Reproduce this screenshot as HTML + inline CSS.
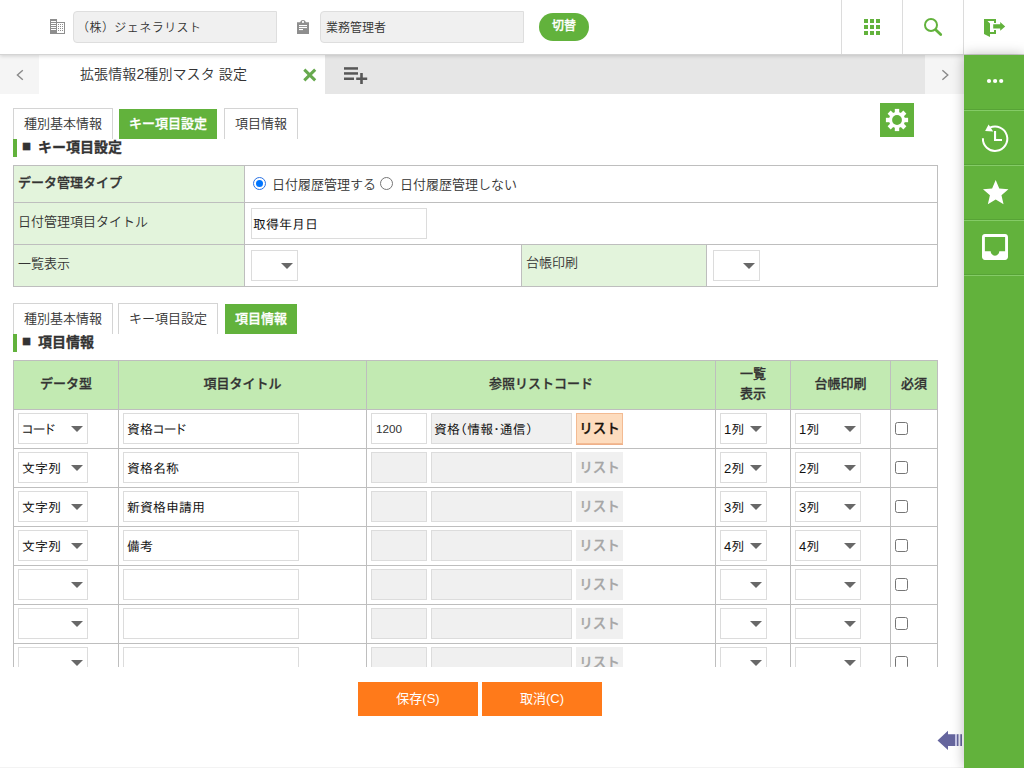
<!DOCTYPE html>
<html lang="ja">
<head>
<meta charset="utf-8">
<title>拡張情報2種別マスタ 設定</title>
<style>
*{box-sizing:border-box;margin:0;padding:0}
html,body{width:1024px;height:768px;overflow:hidden;background:#fff}
body{font-family:"Liberation Sans","Noto Sans CJK JP",sans-serif;font-size:13px;font-weight:350;color:#333;position:relative}
.abs{position:absolute}
/* header */
#hdr{position:absolute;left:0;top:0;width:1024px;height:55px;background:#fff;border-bottom:1px solid #d4d4d4;box-shadow:0 1px 4px rgba(0,0,0,.16);z-index:5}
.hin{position:absolute;top:11px;height:32px;background:#f0f0f0;border:1px solid #dedede;border-radius:4px 0 0 4px;font-size:12px;line-height:30px;padding-top:1px;color:#333;padding-left:5px;white-space:nowrap}
.vdiv{position:absolute;top:0;width:1px;height:54px;background:#dcdcdc}
#sw{position:absolute;left:539px;top:13px;width:50px;height:28px;border-radius:14px;background:#62b23c;color:#fff;font-weight:500;-webkit-text-stroke:.3px;font-size:12px;line-height:27px;text-align:center}
/* tab strip */
#strip{position:absolute;left:0;top:55px;width:964px;height:39px;background:#e6e6e6}
#strip .arrL{position:absolute;left:0;top:0;width:39px;height:39px;background:#f5f5f5}
#strip .arrR{position:absolute;left:925px;top:0;width:39px;height:39px;background:#f5f5f5}
#strip .tab{position:absolute;left:39px;top:0;width:286px;height:39px;background:#fff;font-size:14px;line-height:39px;color:#333;white-space:nowrap}
/* side */
#side{position:absolute;left:964px;top:55px;width:60px;height:713px;background:#62b23c;box-shadow:0 0 12px rgba(0,0,0,.27);z-index:6}
#side .sep{position:absolute;left:0;width:60px;height:2px;border-top:1px solid #57a336;border-bottom:1px solid #84cb66}
/* subtabs */
.stab{position:absolute;height:31px;border:1px solid #d4d4d4;border-bottom:none;background:#fff;font-size:13px;line-height:29px;text-align:center;color:#333;white-space:nowrap}
.stab.on{background:#62b23c;border-color:#fff;color:#fff;font-weight:500;-webkit-text-stroke:.3px}
.sec{position:absolute;left:13px;width:300px;height:18px;border-left:4px solid #62b23c;font-size:14px;font-weight:500;-webkit-text-stroke:.3px;line-height:17px;color:#333;white-space:nowrap}
.sec i{position:absolute;left:5px;top:-1px;font-style:normal;font-size:15px;line-height:16px}
.sec b{position:absolute;left:21px;top:0}
/* key table */
.cell{position:absolute;border:1px solid #bebebe;background:#fff}
.cell.g{background:#e3f4dc}
.lbl{position:absolute;font-size:13px;color:#333;white-space:nowrap;line-height:18px}
.inp{position:absolute;background:#fff;border:1px solid #dcdcdc;font-size:13px;color:#111;white-space:nowrap;overflow:hidden;font-family:"Liberation Sans","IPAPGothic","Noto Sans CJK JP",sans-serif}
.inp.dis{background:#f0f0f0;border-color:#dcdcdc}
.inp span{position:absolute;left:3px;top:.5px;line-height:29px}
.inp span.num{font-size:11.7px;color:#333;left:4px;top:0}
.dd:after{content:"";position:absolute;right:4.5px;top:12px;border:6px solid transparent;border-top:6px solid #686868;border-bottom:none}
.th{position:absolute;background:#c2eab2;border:1px solid #bebebe;font-weight:500;-webkit-text-stroke:.3px;font-size:13px;color:#333;text-align:center;line-height:20px;white-space:nowrap}
.lst{position:absolute;width:47px;height:31px;background:#f0f0f0;color:#a6a6a6;font-weight:500;-webkit-text-stroke:.3px;font-size:13.5px;line-height:31px;text-align:center}
.lst.en{background:#fddcbe;border:1px solid #f3bb93;color:#1c140c;line-height:29px;box-shadow:0 1px 0 #eeb08a}
.radio{position:absolute;width:13px;height:13px;border:1px solid #767676;border-radius:50%;background:#fff}
.radio.on{border-color:#2a72e4}
.radio.on:after{content:"";position:absolute;left:1.800px;top:1.800px;width:7.400px;height:7.400px;border-radius:50%;background:#0075ff}
.cb{position:absolute;width:13px;height:13px;border:1px solid #767676;border-radius:2.5px;background:#fff}
.btn{position:absolute;top:682px;width:120px;height:34px;background:#ff7a1a;color:#fff;font-weight:400;font-size:13px;line-height:33px;text-align:center}
#grid{position:absolute;left:0;top:360px;width:964px;height:307px;overflow:hidden}
</style>
</head>
<body>
<div id="hdr">
  <div class="hin" style="left:73px;width:204px"><span style="letter-spacing:.45px;margin-left:-2px">（株）ジェネラリスト</span></div>
  <div class="hin" style="left:320px;width:204px">業務管理者</div>

  <svg class="abs" style="left:50px;top:19px" width="16" height="16" viewBox="0 0 16 16">
    <rect x="0" y="0" width="7" height="15" fill="#8e8e8e"/>
    <g fill="#fff"><rect x="1" y="2" width="5" height="1"/><rect x="1" y="4" width="5" height="1"/><rect x="1" y="6" width="5" height="1"/><rect x="1" y="8" width="5" height="1"/><rect x="1" y="10" width="5" height="1"/></g>
    <path d="M7 3h8v12H7v-1h7V4H7z" fill="#8e8e8e"/>
    <g fill="#8e8e8e"><rect x="8" y="5" width="1" height="1"/><rect x="10" y="5" width="1" height="1"/><rect x="12" y="5" width="1" height="1"/><rect x="8" y="7" width="1" height="1"/><rect x="10" y="7" width="1" height="1"/><rect x="12" y="7" width="1" height="1"/><rect x="8" y="9" width="1" height="1"/><rect x="10" y="9" width="1" height="1"/><rect x="12" y="9" width="1" height="1"/><rect x="8" y="11" width="1" height="1"/><rect x="10" y="11" width="1" height="1"/><rect x="12" y="11" width="1" height="1"/></g>
  </svg>
  <svg class="abs" style="left:296px;top:19px" width="14" height="16" viewBox="0 0 14 16">
    <path d="M1 3.2h3.2C4.6 1.9 5.6 1 7 1s2.400.9 2.800 2.200H13v11.800H1z" fill="#8e8e8e"/>
    <rect x="6" y="2.100" width="2" height="1.700" fill="#fff"/>
    <g fill="#fff"><rect x="3" y="6" width="8" height="1.100"/><rect x="3" y="8" width="8" height="1.100"/><rect x="3" y="10" width="4" height="1.100"/></g>
  </svg>
  <svg class="abs" style="left:864px;top:19px" width="16" height="16" viewBox="0 0 16 16" fill="#62b23c">
    <rect x="0" y="0" width="4" height="4"/><rect x="6" y="0" width="4" height="4"/><rect x="12" y="0" width="4" height="4"/>
    <rect x="0" y="6" width="4" height="4"/><rect x="6" y="6" width="4" height="4"/><rect x="12" y="6" width="4" height="4"/>
    <rect x="0" y="12" width="4" height="4"/><rect x="6" y="12" width="4" height="4"/><rect x="12" y="12" width="4" height="4"/>
  </svg>
  <svg class="abs" style="left:920px;top:14px" width="26" height="26" viewBox="0 0 26 26" fill="none" stroke="#62b23c">
    <circle cx="11" cy="11" r="6" stroke-width="2"/>
    <path d="M16.200 16.200L20.700 20.500" stroke-width="2.800" stroke-linecap="round"/>
  </svg>
  <svg class="abs" style="left:982px;top:17px" width="26" height="22" viewBox="0 0 26 22" fill="#62b23c">
    <path d="M2 2h12v4h-2V4H5.500L8 6.500V15h4v-2h2v4H8v3L2 17z"/>
    <path d="M11.200 7.200h7V5l5 4.400-5 4.400v-2.200h-7z"/>
  </svg>
  <div id="sw">切替</div>
  <div class="vdiv" style="left:841px"></div>
  <div class="vdiv" style="left:902px"></div>
  <div class="vdiv" style="left:963px"></div>
</div>
<div id="strip">
  <div class="arrL"></div>
  <div class="tab"><span style="position:absolute;left:41px;letter-spacing:.1px">拡張情報2種別マスタ 設定</span></div>
  <div class="arrR"></div>

  <svg class="abs" style="left:0;top:0" width="39" height="39" viewBox="0 0 39 39" fill="none" stroke="#8a8a8a" stroke-width="1.400"><path d="M22.800 15.200L17.400 20l5.400 4.800"/></svg>
  <svg class="abs" style="left:925px;top:0" width="39" height="39" viewBox="0 0 39 39" fill="none" stroke="#8a8a8a" stroke-width="1.400"><path d="M17.400 15.200L22.800 20l-5.400 4.800"/></svg>
  <svg class="abs" style="left:301px;top:12px" width="18" height="16" viewBox="0 0 18 16" fill="none" stroke="#67a94e" stroke-width="3"><path d="M3.300 2.600L14.200 13.400M14.200 2.600L3.300 13.400"/></svg>
  <svg class="abs" style="left:342px;top:10px" width="28" height="22" viewBox="0 0 28 22" fill="#575757">
    <rect x="2" y="2.200" width="14" height="2.500"/><rect x="2" y="7.200" width="14" height="2.500"/><rect x="2" y="12.500" width="10" height="2.500"/>
    <rect x="18.200" y="8" width="2.600" height="11"/><rect x="14.200" y="12.500" width="11" height="2.500"/>
  </svg>
</div>
<div id="side">

  <svg class="abs" style="left:0;top:0" width="60" height="220" viewBox="0 0 60 220">
    <g fill="#fff"><circle cx="25" cy="26" r="2.100"/><circle cx="31.100" cy="26" r="2.100"/><circle cx="37.200" cy="26" r="2.100"/></g>
    <g fill="none" stroke="#fff" stroke-width="2"><path d="M25.800 72.700A12.200 12.200 0 1 1 18.900 83.200"/></g>
    <path d="M24.600 69.400L21.100 75.900L29.200 76.400z" fill="#fff"/>
    <path d="M30 76h2.100v8h5.900v2.100H30z" fill="#fff"/>
    <path transform="translate(16.460 122.460) scale(1.270)" d="M12 17.270L18.180 21l-1.640-7.030L22 9.240l-7.190-.61L12 2 9.190 8.630 2 9.240l5.460 4.730L5.820 21z" fill="#fff"/>
    <path transform="translate(13.670 174.670) scale(1.444)" d="M19 3H4.990c-1.110 0-1.980.89-1.980 2L3 19c0 1.100.88 2 1.990 2H19c1.100 0 2-.9 2-2V5c0-1.110-.9-2-2-2zm0 12h-4c0 1.660-1.350 3-3 3s-3-1.340-3-3H4.990V5H19v10z" fill="#fff"/>
  </svg>
  <div class="sep" style="top:54px"></div>
  <div class="sep" style="top:109px"></div>
  <div class="sep" style="top:164px"></div>
  <div class="sep" style="top:219px"></div>
</div>
<div id="main">
<div class="stab" style="left:13px;top:108px;width:100px">種別基本情報</div>
<div class="stab on" style="left:118px;top:108px;width:100px">キー項目設定</div>
<div class="stab" style="left:224px;top:108px;width:74px">項目情報</div>
<div class="sec" style="top:139px"><i>■</i><b>キー項目設定</b></div>
<div class="cell g" style="left:13px;top:165px;width:232px;height:38px"></div>
<div class="cell" style="left:244px;top:165px;width:694px;height:38px"></div>
<div class="cell g" style="left:13px;top:202px;width:232px;height:43px"></div>
<div class="cell" style="left:244px;top:202px;width:694px;height:43px"></div>
<div class="cell g" style="left:13px;top:244px;width:232px;height:43px"></div>
<div class="cell" style="left:244px;top:244px;width:278px;height:43px"></div>
<div class="cell g" style="left:521px;top:244px;width:186px;height:43px"></div>
<div class="cell" style="left:706px;top:244px;width:232px;height:43px"></div>
<div class="lbl" style="left:18px;top:174px;font-weight:500;-webkit-text-stroke:.3px">データ管理タイプ</div>
<div class="lbl" style="left:18px;top:213px">日付管理項目タイトル</div>
<div class="lbl" style="left:18px;top:255px">一覧表示</div>
<div class="lbl" style="left:526px;top:254px">台帳印刷</div>
<div class="radio on" style="left:253px;top:177px"></div>
<div class="lbl" style="left:272px;top:176px">日付履歴管理する</div>
<div class="radio" style="left:380px;top:177px"></div>
<div class="lbl" style="left:400px;top:176px">日付履歴管理しない</div>
<div class="inp" style="left:251px;top:208px;width:176px;height:31px"><span style="left:1px">取得年月日</span></div>
<div class="inp dd" style="left:251px;top:250px;width:47px;height:31px"></div>
<div class="inp dd" style="left:713px;top:250px;width:47px;height:31px"></div>
<div class="stab" style="left:13px;top:303px;width:100px">種別基本情報</div>
<div class="stab" style="left:118px;top:303px;width:100px">キー項目設定</div>
<div class="stab on" style="left:224px;top:303px;width:74px">項目情報</div>
<div class="sec" style="top:334px"><i>■</i><b>項目情報</b></div>
<div id="grid">
<div class="th" style="left:13px;top:0;width:106px;height:50px;padding-top:13px">データ型</div>
<div class="th" style="left:118px;top:0;width:249px;height:50px;padding-top:13px">項目タイトル</div>
<div class="th" style="left:366px;top:0;width:350px;height:50px;padding-top:13px">参照リストコード</div>
<div class="th" style="left:715px;top:0;width:76px;height:50px;padding-top:3px">一覧<br>表示</div>
<div class="th" style="left:790px;top:0;width:101px;height:50px;padding-top:13px">台帳印刷</div>
<div class="th" style="left:890px;top:0;width:48px;height:50px;padding-top:13px">必須</div>
<div class="cell" style="left:13px;top:49px;width:106px;height:40px"></div>
<div class="cell" style="left:118px;top:49px;width:249px;height:40px"></div>
<div class="cell" style="left:366px;top:49px;width:350px;height:40px"></div>
<div class="cell" style="left:715px;top:49px;width:76px;height:40px"></div>
<div class="cell" style="left:790px;top:49px;width:101px;height:40px"></div>
<div class="cell" style="left:890px;top:49px;width:48px;height:40px"></div>
<div class="inp dd" style="left:18px;top:53px;width:70px;height:31px"><span>コード</span></div>
<div class="inp" style="left:123px;top:53px;width:176px;height:31px"><span>資格コード</span></div>
<div class="inp" style="left:371px;top:53px;width:56px;height:31px"><span class="num">1200</span></div>
<div class="inp dis" style="left:431px;top:53px;width:141px;height:31px"><span style="left:2px">資格（情報・通信）</span></div>
<div class="lst en" style="left:576px;top:53px">リスト</div>
<div class="inp dd" style="left:720px;top:53px;width:47px;height:31px"><span>1列</span></div>
<div class="inp dd" style="left:795px;top:53px;width:66px;height:31px"><span>1列</span></div>
<div class="cb" style="left:895px;top:62px"></div>
<div class="cell" style="left:13px;top:88px;width:106px;height:40px"></div>
<div class="cell" style="left:118px;top:88px;width:249px;height:40px"></div>
<div class="cell" style="left:366px;top:88px;width:350px;height:40px"></div>
<div class="cell" style="left:715px;top:88px;width:76px;height:40px"></div>
<div class="cell" style="left:790px;top:88px;width:101px;height:40px"></div>
<div class="cell" style="left:890px;top:88px;width:48px;height:40px"></div>
<div class="inp dd" style="left:18px;top:92px;width:70px;height:31px"><span>文字列</span></div>
<div class="inp" style="left:123px;top:92px;width:176px;height:31px"><span>資格名称</span></div>
<div class="inp dis" style="left:371px;top:92px;width:56px;height:31px"></div>
<div class="inp dis" style="left:431px;top:92px;width:141px;height:31px"></div>
<div class="lst" style="left:576px;top:92px">リスト</div>
<div class="inp dd" style="left:720px;top:92px;width:47px;height:31px"><span>2列</span></div>
<div class="inp dd" style="left:795px;top:92px;width:66px;height:31px"><span>2列</span></div>
<div class="cb" style="left:895px;top:101px"></div>
<div class="cell" style="left:13px;top:127px;width:106px;height:40px"></div>
<div class="cell" style="left:118px;top:127px;width:249px;height:40px"></div>
<div class="cell" style="left:366px;top:127px;width:350px;height:40px"></div>
<div class="cell" style="left:715px;top:127px;width:76px;height:40px"></div>
<div class="cell" style="left:790px;top:127px;width:101px;height:40px"></div>
<div class="cell" style="left:890px;top:127px;width:48px;height:40px"></div>
<div class="inp dd" style="left:18px;top:131px;width:70px;height:31px"><span>文字列</span></div>
<div class="inp" style="left:123px;top:131px;width:176px;height:31px"><span>新資格申請用</span></div>
<div class="inp dis" style="left:371px;top:131px;width:56px;height:31px"></div>
<div class="inp dis" style="left:431px;top:131px;width:141px;height:31px"></div>
<div class="lst" style="left:576px;top:131px">リスト</div>
<div class="inp dd" style="left:720px;top:131px;width:47px;height:31px"><span>3列</span></div>
<div class="inp dd" style="left:795px;top:131px;width:66px;height:31px"><span>3列</span></div>
<div class="cb" style="left:895px;top:140px"></div>
<div class="cell" style="left:13px;top:166px;width:106px;height:40px"></div>
<div class="cell" style="left:118px;top:166px;width:249px;height:40px"></div>
<div class="cell" style="left:366px;top:166px;width:350px;height:40px"></div>
<div class="cell" style="left:715px;top:166px;width:76px;height:40px"></div>
<div class="cell" style="left:790px;top:166px;width:101px;height:40px"></div>
<div class="cell" style="left:890px;top:166px;width:48px;height:40px"></div>
<div class="inp dd" style="left:18px;top:170px;width:70px;height:31px"><span>文字列</span></div>
<div class="inp" style="left:123px;top:170px;width:176px;height:31px"><span>備考</span></div>
<div class="inp dis" style="left:371px;top:170px;width:56px;height:31px"></div>
<div class="inp dis" style="left:431px;top:170px;width:141px;height:31px"></div>
<div class="lst" style="left:576px;top:170px">リスト</div>
<div class="inp dd" style="left:720px;top:170px;width:47px;height:31px"><span>4列</span></div>
<div class="inp dd" style="left:795px;top:170px;width:66px;height:31px"><span>4列</span></div>
<div class="cb" style="left:895px;top:179px"></div>
<div class="cell" style="left:13px;top:205px;width:106px;height:40px"></div>
<div class="cell" style="left:118px;top:205px;width:249px;height:40px"></div>
<div class="cell" style="left:366px;top:205px;width:350px;height:40px"></div>
<div class="cell" style="left:715px;top:205px;width:76px;height:40px"></div>
<div class="cell" style="left:790px;top:205px;width:101px;height:40px"></div>
<div class="cell" style="left:890px;top:205px;width:48px;height:40px"></div>
<div class="inp dd" style="left:18px;top:209px;width:70px;height:31px"><span></span></div>
<div class="inp" style="left:123px;top:209px;width:176px;height:31px"><span></span></div>
<div class="inp dis" style="left:371px;top:209px;width:56px;height:31px"></div>
<div class="inp dis" style="left:431px;top:209px;width:141px;height:31px"></div>
<div class="lst" style="left:576px;top:209px">リスト</div>
<div class="inp dd" style="left:720px;top:209px;width:47px;height:31px"><span></span></div>
<div class="inp dd" style="left:795px;top:209px;width:66px;height:31px"><span></span></div>
<div class="cb" style="left:895px;top:218px"></div>
<div class="cell" style="left:13px;top:244px;width:106px;height:40px"></div>
<div class="cell" style="left:118px;top:244px;width:249px;height:40px"></div>
<div class="cell" style="left:366px;top:244px;width:350px;height:40px"></div>
<div class="cell" style="left:715px;top:244px;width:76px;height:40px"></div>
<div class="cell" style="left:790px;top:244px;width:101px;height:40px"></div>
<div class="cell" style="left:890px;top:244px;width:48px;height:40px"></div>
<div class="inp dd" style="left:18px;top:248px;width:70px;height:31px"><span></span></div>
<div class="inp" style="left:123px;top:248px;width:176px;height:31px"><span></span></div>
<div class="inp dis" style="left:371px;top:248px;width:56px;height:31px"></div>
<div class="inp dis" style="left:431px;top:248px;width:141px;height:31px"></div>
<div class="lst" style="left:576px;top:248px">リスト</div>
<div class="inp dd" style="left:720px;top:248px;width:47px;height:31px"><span></span></div>
<div class="inp dd" style="left:795px;top:248px;width:66px;height:31px"><span></span></div>
<div class="cb" style="left:895px;top:257px"></div>
<div class="cell" style="left:13px;top:283px;width:106px;height:40px"></div>
<div class="cell" style="left:118px;top:283px;width:249px;height:40px"></div>
<div class="cell" style="left:366px;top:283px;width:350px;height:40px"></div>
<div class="cell" style="left:715px;top:283px;width:76px;height:40px"></div>
<div class="cell" style="left:790px;top:283px;width:101px;height:40px"></div>
<div class="cell" style="left:890px;top:283px;width:48px;height:40px"></div>
<div class="inp dd" style="left:18px;top:287px;width:70px;height:31px"><span></span></div>
<div class="inp" style="left:123px;top:287px;width:176px;height:31px"><span></span></div>
<div class="inp dis" style="left:371px;top:287px;width:56px;height:31px"></div>
<div class="inp dis" style="left:431px;top:287px;width:141px;height:31px"></div>
<div class="lst" style="left:576px;top:287px">リスト</div>
<div class="inp dd" style="left:720px;top:287px;width:47px;height:31px"><span></span></div>
<div class="inp dd" style="left:795px;top:287px;width:66px;height:31px"><span></span></div>
<div class="cb" style="left:895px;top:296px"></div>
</div>
<div class="abs" style="left:880px;top:103px;width:34px;height:34px;background:#62b23c"><svg width="34" height="34" viewBox="-17 -17 34 34"><g fill="#fff"><circle r="8"/><rect x="-2.200" y="-11.100" width="4.400" height="6" transform="rotate(0)"/><rect x="-2.200" y="-11.100" width="4.400" height="6" transform="rotate(45)"/><rect x="-2.200" y="-11.100" width="4.400" height="6" transform="rotate(90)"/><rect x="-2.200" y="-11.100" width="4.400" height="6" transform="rotate(135)"/><rect x="-2.200" y="-11.100" width="4.400" height="6" transform="rotate(180)"/><rect x="-2.200" y="-11.100" width="4.400" height="6" transform="rotate(225)"/><rect x="-2.200" y="-11.100" width="4.400" height="6" transform="rotate(270)"/><rect x="-2.200" y="-11.100" width="4.400" height="6" transform="rotate(315)"/></g><circle r="4.900" fill="#62b23c"/></svg></div>
<svg class="abs" style="left:936px;top:729px" width="28" height="23" viewBox="0 0 28 23"><path d="M1.500 11.400L12 1.700V5.200H19V17H12V21z" fill="#66669e"/><rect x="19" y="5.200" width="2" height="11.800" fill="#c9c9ea"/><rect x="21" y="5.200" width="1.700" height="11.800" fill="#66669e"/><rect x="22.700" y="5.200" width="1.600" height="11.800" fill="#e9e9f6"/><rect x="24.300" y="5.200" width="1.700" height="11.800" fill="#66669e"/></svg>
<div class="btn" style="left:358px">保存(S)</div>
<div class="btn" style="left:482px">取消(C)</div>
<div style="position:absolute;left:0;top:767px;width:964px;height:1px;background:#f3f3f3"></div>
</div><!--/main-->
</body>
</html>
